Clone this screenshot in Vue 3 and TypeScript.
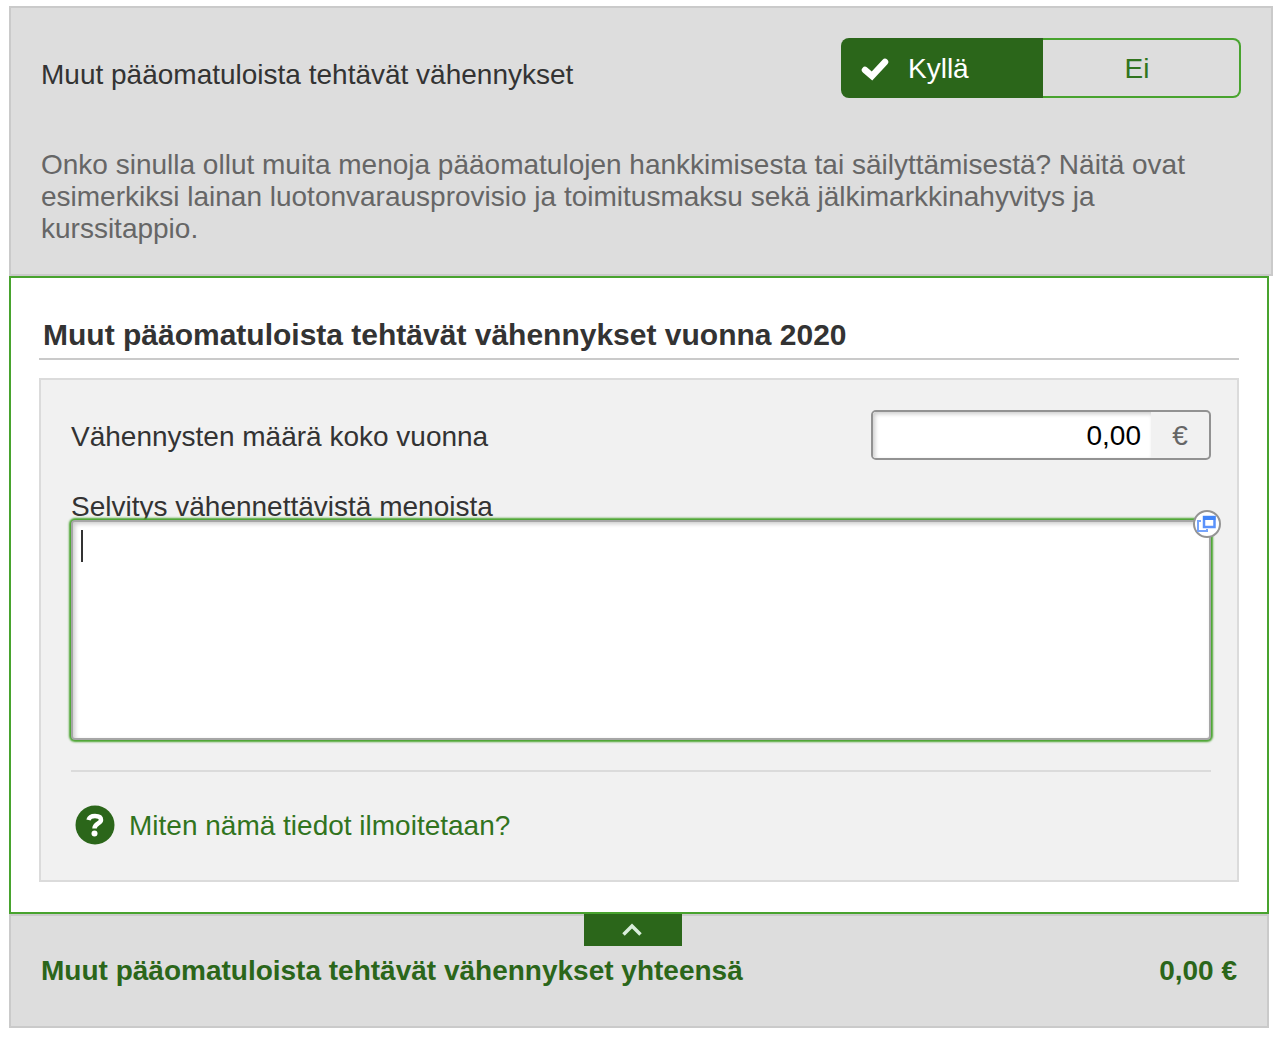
<script setup lang="ts">
import { ref } from 'vue'

const hasDeductions = ref(true)
const open = ref(true)
const amount = ref('0,00')
const explanation = ref('')
</script>

<template>
  <main class="page">
    <section class="question">
      <div class="question-row">
        <span id="question-label" class="question-label">Muut pääomatuloista tehtävät vähennykset</span>
        <div class="toggle" role="group" aria-labelledby="question-label">
          <button type="button" class="choice yes" :aria-pressed="hasDeductions" @click="hasDeductions = true">
            <svg class="check" viewBox="0 0 28 24" aria-hidden="true">
              <path d="M4 13 L11 19 L24 5" fill="none" stroke="#fff" stroke-width="6.500" stroke-linecap="round" />
            </svg>
            <span>Kyllä</span>
          </button>
          <button type="button" class="choice no" :aria-pressed="!hasDeductions" @click="hasDeductions = false">Ei</button>
        </div>
      </div>
      <p class="intro">
        Onko sinulla ollut muita menoja pääomatulojen hankkimisesta tai säilyttämisestä? Näitä ovat esimerkiksi lainan
        luotonvarausprovisio ja toimitusmaksu sekä jälkimarkkinahyvitys ja kurssitappio.
      </p>
    </section>

    <section v-if="open" class="details">
      <h2 class="title">Muut pääomatuloista tehtävät vähennykset vuonna 2020</h2>
      <div class="form">
        <div class="amount-row">
          <label for="amount">Vähennysten määrä koko vuonna</label>
          <div class="money">
            <input id="amount" v-model="amount" type="text" inputmode="decimal" />
            <span class="unit">€</span>
          </div>
        </div>
        <label class="area-label" for="explanation">Selvitys vähennettävistä menoista</label>
        <div class="area-wrap">
          <textarea id="explanation" v-model="explanation"></textarea>
          <span v-if="!explanation" class="caret" aria-hidden="true"></span>
          <button type="button" class="expand" aria-label="Avaa ikkunassa">
            <svg viewBox="0 0 28 28" aria-hidden="true">
              <circle cx="14" cy="14" r="13" fill="#fff" stroke="#949494" stroke-width="2" />
              <path d="M8 11 H5 V21 H14 V19" fill="none" stroke="#76a4fb" stroke-width="2" />
              <rect x="11" y="7" width="10.500" height="10" fill="#fff" stroke="#5b92fa" stroke-width="2.500" />
              <rect x="10" y="6" width="12.500" height="4" fill="#4285f8" />
            </svg>
          </button>
        </div>
        <div class="help-row">
          <a href="#ohje" class="help">
            <svg class="help-icon" viewBox="0 0 40 40" aria-hidden="true">
              <circle cx="20" cy="20" r="19.500" fill="#2b661a" />
              <path
                d="M13.500 15 C14.500 11.500 17 11 20 11 C23.500 11 26 12 26 15 C26 18.500 19.500 18.500 19.500 23.500"
                fill="none" stroke="#fff" stroke-width="4.500"
              />
              <circle cx="19.500" cy="28.500" r="3" fill="#fff" />
            </svg>
            <span>Miten nämä tiedot ilmoitetaan?</span>
          </a>
        </div>
      </div>
    </section>

    <section class="summary">
      <button type="button" class="collapse" aria-label="Sulje" :aria-expanded="open" @click="open = !open">
        <svg viewBox="0 0 24 16" aria-hidden="true">
          <path d="M2.500 12.500 L11 4 L19.500 12.500" fill="none" stroke="#d9eedb" stroke-width="3.500" />
        </svg>
      </button>
      <div class="total">
        <span>Muut pääomatuloista tehtävät vähennykset yhteensä</span>
        <span>0,00 €</span>
      </div>
    </section>
  </main>
</template>

<style>
body {
  background: #fff;
}
</style>

<style scoped>
.page,
.page * {
  box-sizing: border-box;
}

.page {
  padding: 6px 11px 10px 9px;
  font: 28px/32px "Liberation Sans", Arial, sans-serif;
  color: #333;
}

button,
input,
textarea {
  font: inherit;
  margin: 0;
  padding: 0;
  border: 0;
  border-radius: 0;
  outline: 0;
}

button {
  cursor: pointer;
}

.question {
  padding: 30px 30px 29px;
  border: 2px solid #cacaca;
  background: #ddd;
}

.question-row {
  display: flex;
  justify-content: space-between;
  align-items: flex-start;
}

.question-label {
  padding-top: 21px;
}

.toggle {
  display: flex;
  width: 400px;
  height: 60px;
}

.yes {
  display: flex;
  align-items: center;
  gap: 19px;
  width: 202px;
  padding: 2px 0 0 20px;
  border-radius: 8px 0 0 8px;
  background: #2b661a;
  color: #fff;
}

.check {
  width: 28px;
  height: 24px;
}

.no {
  flex: 1;
  padding: 2px 8px 0 0;
  border: 2px solid #48a32e;
  border-left: 0;
  border-radius: 0 8px 8px 0;
  background: transparent;
  color: #31741e;
}

.intro {
  margin: 51px 0 0;
  color: #666;
}

.details {
  margin-right: 4px;
  padding: 28px 28px 30px;
  border: 2px solid #48a32e;
  background: #fff;
}

.title {
  margin: 0 0 18px;
  padding: 12px 4px 6px;
  border-bottom: 2px solid #cacaca;
  font-size: 30px;
  line-height: 34px;
}

.form {
  padding: 30px 26px 30px 30px;
  border: 2px solid #dbdbdb;
  background: #f1f1f1;
}

.amount-row {
  display: flex;
  justify-content: space-between;
  align-items: flex-start;
  margin-bottom: 31px;
}

.amount-row label {
  padding-top: 11px;
}

.money {
  display: flex;
  width: 340px;
  height: 50px;
  border: 2px solid #929292;
  border-radius: 5px;
  overflow: hidden;
}

.money input {
  flex: 1;
  min-width: 0;
  padding: 2px 10px 0 0;
  background: #fff;
  box-shadow: inset 2px 2px 4px #ccc;
  color: #000;
  text-align: right;
}

.unit {
  width: 58px;
  line-height: 48px;
  text-align: center;
  color: #666;
}

.area-label {
  display: block;
}

.area-wrap {
  position: relative;
  margin-top: -3px;
}

textarea {
  display: block;
  width: 100%;
  height: 220px;
  padding: 8px;
  border: 2px solid #a6a6a6;
  border-radius: 4px;
  background: #fff;
  box-shadow: 0 0 2px 2px #48a32e, inset 2px 2px 4px #ccc;
  caret-color: transparent;
  color: #000;
  resize: none;
}

.caret {
  position: absolute;
  top: 10px;
  left: 10px;
  width: 2px;
  height: 32px;
  background: #333;
  pointer-events: none;
}

.expand {
  position: absolute;
  top: -10px;
  right: -10px;
  width: 28px;
  height: 28px;
  border-radius: 50%;
  background: transparent;
}

.expand svg,
.help-icon,
.collapse svg {
  display: block;
}

.help-row {
  margin-top: 30px;
  padding-top: 28px;
  border-top: 2px solid #dbdbdb;
}

.help {
  display: flex;
  align-items: center;
  gap: 14px;
  height: 50px;
  padding-left: 4px;
  color: #31741e;
  text-decoration: none;
}

.help span {
  padding-top: 2px;
}

.help-icon {
  width: 40px;
  height: 40px;
}

.summary {
  margin-right: 4px;
  padding: 0 30px 39px;
  border: 2px solid #cacaca;
  background: #ddd;
  color: #2b661a;
  font-weight: bold;
}

.collapse {
  display: flex;
  justify-content: center;
  align-items: center;
  width: 98px;
  height: 32px;
  margin: -2px 0 9px calc(50% - 55px);
  background: #2b661a;
}

.collapse svg {
  width: 24px;
  height: 16px;
}

.total {
  display: flex;
  justify-content: space-between;
}
</style>
